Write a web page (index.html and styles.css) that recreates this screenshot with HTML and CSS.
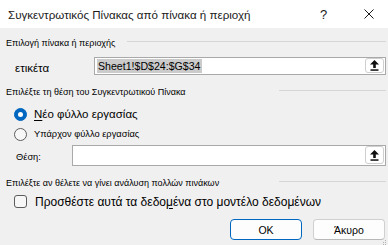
FILE: index.html
```html
<!DOCTYPE html>
<html lang="el">
<head>
<meta charset="utf-8">
<title>Συγκεντρωτικός Πίνακας</title>
<link rel="stylesheet" href="styles.css">
</head>
<body>
<div class="dialog">
  <header class="titlebar">
    <span class="title">Συγκεντρωτικός Πίνακας από πίνακα ή περιοχή</span>
    <span class="help">?</span>
    <span class="close"><svg width="10" height="10" viewBox="0 0 10 10"><path d="M0.5 0.5L9.5 9.5M9.5 0.5L0.5 9.5" stroke="#1a1a1a" stroke-width="1"/></svg></span>
  </header>
  <main class="content">
    <div class="group-head head-a"><span class="group-label">Επιλογή πίνακα ή περιοχής</span><i class="rule"></i></div>
    <div class="field field-a">
      <span class="field-label label-big">ετικέτα</span>
      <div class="input input-a">
        <span class="sel">Sheet1!$D$24:$G$34</span>
        <span class="pick"><svg width="9" height="11" viewBox="0 0 9 11"><path d="M4.5 0L0 4.6H3.2V8H5.8V4.6H9Z" fill="#111"/><rect x="0.5" y="9.3" width="8" height="1.5" fill="#111"/></svg></span>
      </div>
    </div>
    <div class="group-head head-b"><span class="group-label">Επιλέξτε τη θέση του Συγκεντρωτικού Πίνακα</span><i class="rule"></i></div>
    <div class="option opt-first"><span class="radio radio-on"></span><span class="opt-text label-big"><u>Ν</u>έο φύλλο εργασίας</span></div>
    <div class="option opt-second"><span class="radio"></span><span class="opt-text label-small">Υπάρχον φύλλο εργασίας</span></div>
    <div class="field field-b">
      <span class="field-label label-small">Θέση:</span>
      <div class="input input-b">
        <span class="empty"></span>
        <span class="pick"><svg width="9" height="11" viewBox="0 0 9 11"><path d="M4.5 0L0 4.6H3.2V8H5.8V4.6H9Z" fill="#111"/><rect x="0.5" y="9.3" width="8" height="1.5" fill="#111"/></svg></span>
      </div>
    </div>
    <div class="group-head head-c"><span class="group-label">Επιλέξτε αν θέλετε να γίνει ανάλυση πολλών πινάκων</span><i class="rule"></i></div>
    <div class="option check-row"><span class="check"></span><span class="opt-text label-check">Προσθέστε αυτά τα δεδο<u>μ</u>ένα στο μοντέλο δεδομένων</span></div>
    <div class="actions">
      <button class="btn btn-primary">OK</button>
      <button class="btn">Άκυρο</button>
    </div>
  </main>
  <svg class="grip" width="4" height="5" viewBox="0 0 4 5"><rect x="2" y="0" width="1" height="1" fill="#b0b0b0"/><rect x="2" y="2" width="1" height="1" fill="#b0b0b0"/><rect x="0" y="2" width="1" height="1" fill="#b0b0b0"/><rect x="2" y="4" width="1" height="1" fill="#b0b0b0"/><rect x="0" y="4" width="1" height="1" fill="#b0b0b0"/></svg>
</div>
</body>
</html>
```
FILE: styles.css
```css
* { box-sizing: border-box; }
html, body { margin: 0; padding: 0; }
body {
  width: 388px;
  height: 245px;
  overflow: hidden;
  background: #f0f0f0;
  font-family: "Liberation Sans", "Noto Sans", sans-serif;
  color: #000;
}
.dialog {
  position: relative;
  width: 388px;
  height: 245px;
  display: flex;
  flex-direction: column;
}
.titlebar {
  height: 28px;
  flex: none;
  background: #fff;
  display: flex;
  align-items: center;
  padding-left: 8px;
}
.title {
  font-size: 11.6px;
  color: #1a1a1a;
  flex: 1;
  white-space: nowrap;
}
.help {
  font-size: 13px;
  color: #1a1a1a;
  width: 8px;
  margin-right: 36px;
}
.close {
  display: flex;
  width: 10px;
  margin-right: 14px;
}
.content {
  padding: 0 2px 0 6px;
  display: flex;
  flex-direction: column;
}
.group-head {
  display: grid;
  height: 18px;
  align-items: center;
  margin-top: 8px;
}
.head-a { grid-template-columns: 121px 1fr; margin-top: 6px; }
.head-b, .head-c { grid-template-columns: 273px 1fr; }
.group-label {
  font-size: 9px;
  line-height: 18px;
  white-space: nowrap;
  color: #000;
}
.rule {
  display: block;
  height: 1px;
  background: #d6d6d6;
  margin-top: -3px;
}
.field {
  display: flex;
}
.field-a { margin-top: 5px; height: 18px; }
.field-b { margin-top: 3px; height: 21px; }
.field-label {
  white-space: nowrap;
  flex: none;
}
.field-a .field-label { width: 88px; padding-left: 9px; line-height: 18px; padding-top: 2px; }
.field-b .field-label { width: 66px; padding-left: 10px; line-height: 21px; padding-top: 2px; }
.label-big { font-size: 11.5px; }
.label-small { font-size: 9.3px; }
.label-check { font-size: 12px; }
.input {
  flex: 1;
  background: #fff;
  border: 1px solid #a9a9a9;
  display: flex;
  justify-content: space-between;
  align-items: flex-start;
  padding: 0 1px 0 2px;
}
.sel {
  margin-top: 1px;
  background: #cbcbcb;
  font-size: 10.6px;
  line-height: 14px;
  padding: 0 1px 0 1px;
  white-space: nowrap;
}
.pick {
  width: 19px;
  background: #fff;
  border: 1px solid #cfcfcf;
  border-radius: 3px;
  display: flex;
  align-items: center;
  justify-content: center;
}
.input-a .pick { height: 15px; }
.input-b .pick { height: 18px; }
.option {
  display: flex;
  align-items: center;
  height: 16px;
}
.opt-first { margin-top: 5px; }
.opt-second { margin-top: 4px; }
.radio {
  width: 13px;
  height: 13px;
  border-radius: 50%;
  border: 1px solid #5c5c5c;
  background: #f7f7f7;
  margin-left: 8px;
  flex: none;
  display: flex;
  align-items: center;
  justify-content: center;
}
.radio-on {
  background: #0067c0;
  border-color: #0067c0;
}
.radio-on::after {
  content: "";
  width: 5px;
  height: 5px;
  border-radius: 50%;
  background: #fff;
}
.opt-text {
  margin-left: 7px;
  white-space: nowrap;
}
.opt-text u { text-decoration-thickness: 1px; text-underline-offset: 2px; }
.check-row { margin-top: 3px; height: 13px; }
.check {
  width: 13px;
  height: 13px;
  border: 1px solid #5c5c5c;
  border-radius: 3px;
  background: #f7f7f7;
  margin-left: 8px;
  flex: none;
}
.check-row .opt-text { margin-left: 8px; }
.actions {
  display: flex;
  justify-content: flex-end;
  gap: 11px;
  margin-top: 11px;
  padding-right: 1px;
}
.btn {
  width: 72px;
  height: 21px;
  background: #fdfdfd;
  border: 1px solid #d0d0d0;
  border-bottom-color: #b8b8b8;
  border-radius: 4px;
  font-family: inherit;
  font-size: 10.5px;
  color: #000;
  padding: 0;
}
.btn-primary {
  border: 1px solid #0067c0;
}
.grip {
  position: absolute;
  right: 1px;
  bottom: 0;
}
```
